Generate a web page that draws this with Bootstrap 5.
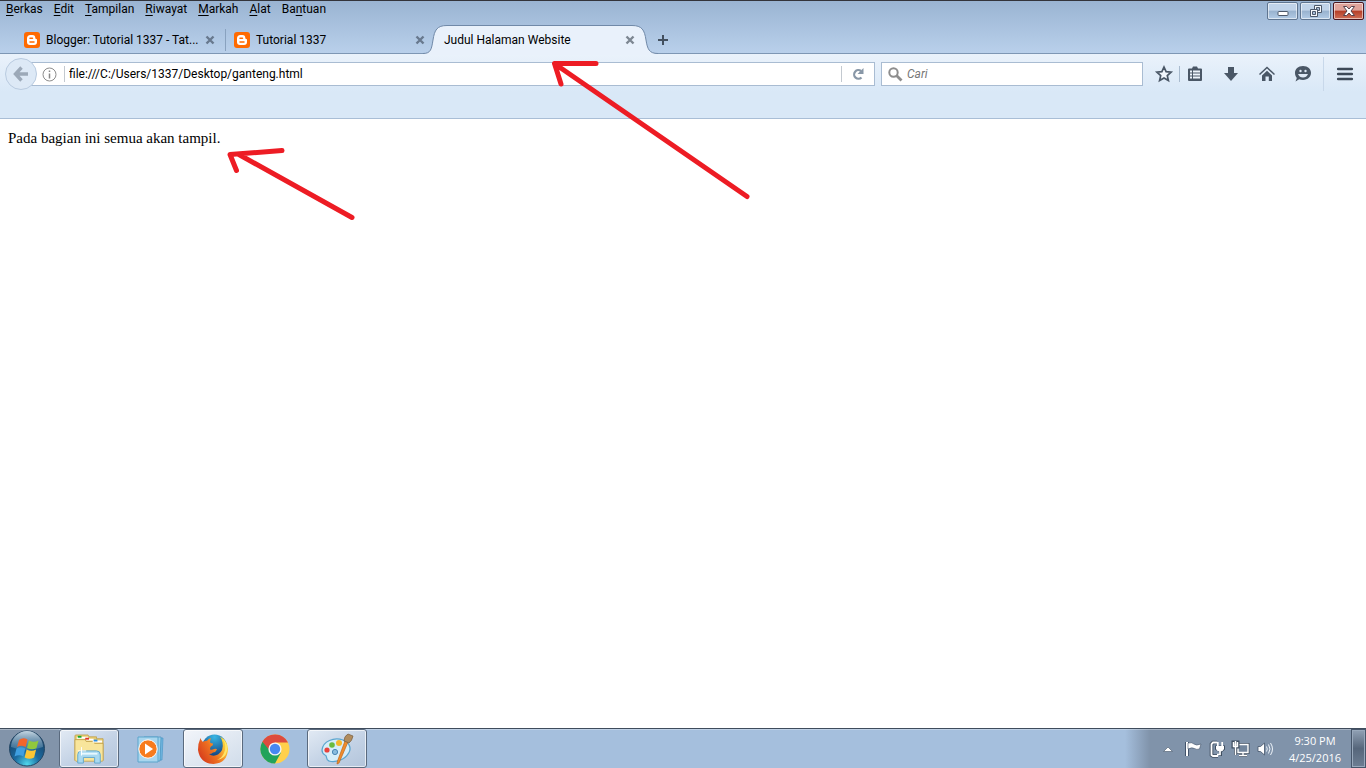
<!DOCTYPE html>
<html lang="id">
<head>
<meta charset="utf-8">
<meta name="viewport" content="width=device-width, initial-scale=1">
<title>Judul Halaman Website</title>
<link href="https://cdn.jsdelivr.net/npm/bootstrap@5.3.0/dist/css/bootstrap.min.css" rel="stylesheet">
<style>
body{font-size:12px;line-height:16px;color:#000;background:#fff;overflow:hidden}
button{font:inherit;color:inherit;background:none;border:0;padding:0}
svg{display:block;flex:none;overflow:visible}
.ui{font-family:Roboto,"Open Sans",sans-serif}
.chrome-top{height:54px;background:linear-gradient(#9ab4d2,#b9d0eb);border-top:1px solid #33343a;border-bottom:1px solid #7e97b4}
.menu-row{height:16px;padding-left:6px;gap:11px}
.menu-row u{text-underline-offset:2px}
.win-buttons{top:1px;right:2px;gap:2px}
.win-btn{width:31px;height:18px;border:1px solid #5f7590;border-radius:2px;box-shadow:inset 0 0 0 1px rgba(255,255,255,.55);background:linear-gradient(#c0d3e9 45%,#98b2ce 50%,#b2cbe6)}
.win-btn.shut{border-color:#4b1720;background:linear-gradient(#e0a49b 45%,#b53e27 50%,#cf7059)}
.tab-row{height:36px;padding:8px 0 0 15px}
.page-tab{width:210px;height:29px;padding:0 10px 0 9px}
.page-tab .tab-icon{margin-right:6px}
.page-tab+.page-tab:not(.current)::before{content:"";position:absolute;left:0;top:4px;height:22px;width:1px;background:#89a2bf}
.tab-shape{left:-12px;top:0}
.plus{width:36px;height:30px}
.toolbar-zone{height:65px;background:linear-gradient(#eaf2fb,#d9e8f7 60%);border-bottom:1px solid #a9bed6;padding:8px 0 0 5px}
.back{width:32px;height:32px;border:1px solid #b9cbe0;border-radius:50%;background:#dde9f6;margin-top:-4px;z-index:1}
.field{height:24px;border:1px solid #a9bcd2;background:#fff}
.field input{border:0;outline:0;background:none;padding:0;min-width:0;line-height:16px}
.field input::placeholder{color:#777;font-style:italic;opacity:1}
.address{margin-left:-6px;padding-left:10px}
.reload{width:32px;height:22px}
.rule{width:1px;height:16px;background:#c3c9d0}
.address svg+.rule{margin:0 4px 0 7px}
.search{width:262px;margin-left:6px;padding-left:6px}
.tools{padding:0 13px;height:24px}
.tools .rule{background:#a9bbcf;margin:0 5px 0 7px}
.tools .tall{height:34px;background:#c8d8ea;margin:0 13px 0 10px}
.tool-set{gap:16px}
.tool-set button{width:20px}
.page-body{font-family:"Liberation Serif",serif;font-size:15px;line-height:20px;padding:9px 8px}
.taskbar{height:40px;background:linear-gradient(90deg,#8294aa 59px,#a5bfdd 60px,#a5bfdd calc(100% - 241px),#8093aa calc(100% - 216px));border-top:1px solid #3f4c5c;box-shadow:inset 0 1px 0 rgba(255,255,255,.3)}
.start{width:54px;margin-right:5px}
.task-set{gap:2px}
.task{width:60px;height:39px;border:1px solid transparent;border-radius:3px}
.task.open{border-color:#5a6a7e;box-shadow:inset 0 0 0 1px rgba(255,255,255,.65);background:linear-gradient(150deg,#e2eaf4,#c3d2e5 55%,#b3c5db)}
.task.front{background:linear-gradient(150deg,#f2f5fa,#dfe7f1 55%,#d0dcea)}
.tray{gap:8px;margin:0 6px 0 12px}
.clock{color:#fff;font-family:"Open Sans",sans-serif;font-size:11px;line-height:17px;width:72px}
.desk{width:15px;height:39px;border:1px solid #46556a;box-shadow:inset 0 0 0 1px #99a9bc;background:linear-gradient(#91a1b5,#56667b 50%,#6d7e93)}
.marks{left:0;top:0;pointer-events:none;z-index:5}
</style>
</head>
<body class="ui vh-100 d-flex flex-column position-relative">
<header class="chrome-top position-relative">
  <nav class="menu-row d-flex align-items-center" aria-label="Menu">
    <button><u>B</u>erkas</button><button><u>E</u>dit</button><button><u>T</u>ampilan</button><button><u>R</u>iwayat</button><button><u>M</u>arkah</button><button><u>A</u>lat</button><button>Ba<u>n</u>tuan</button>
  </nav>
  <div class="win-buttons position-absolute d-flex">
    <button class="win-btn d-flex justify-content-center align-items-center" aria-label="Minimize"><svg width="12" height="14"><rect x="1" y="7.500" width="10" height="4" rx="1" fill="#fff" stroke="#4d596b"/></svg></button>
    <button class="win-btn d-flex justify-content-center align-items-center" aria-label="Restore"><svg width="14" height="12"><g fill="#f5f8fb" stroke="#4d596b"><path d="M5.500 .5h7v7h-7z"/><path d="M7.500 2.500h3v3h-3z" fill="#a6bdd8"/><path d="M1.500 4.500h7v7h-7z"/><path d="M3.500 6.500h3v3h-3z" fill="#a6bdd8"/></g></svg></button>
    <button class="win-btn shut d-flex justify-content-center align-items-center" aria-label="Close"><svg width="14" height="12"><path d="M1.500 1.500h3.200L7 4l2.300-2.500h3.200L9 6l3.500 4.500H9.300L7 8l-2.300 2.500H1.500L5 6z" fill="#fff" stroke="#54414c"/></svg></button>
  </div>
  <div class="tab-row d-flex">
    <div class="page-tab position-relative d-flex align-items-center">
      <svg class="tab-icon" width="16" height="16"><rect width="16" height="16" rx="3" fill="#ff6a00"/><path d="M3 6.500A3.500 3.500 0 0 1 6.500 3h2A3 3 0 0 1 11.300 6q.1 1 1 1 .7.100.7.800V10a3 3 0 0 1-3 3H6a3 3 0 0 1-3-3z" fill="#fff"/><path d="M6 6.200h2.500M6 9.900h4" stroke="#ff6a00" stroke-width="1.500" stroke-linecap="round"/></svg>
      <span class="flex-grow-1 text-nowrap">Blogger: Tutorial 1337 - Tat...</span>
      <button aria-label="Tutup tab"><svg width="10" height="10"><path d="M1.500 1.500l7 7m0-7l-7 7" stroke="#68798e" stroke-width="2.400"/></svg></button>
    </div>
    <div class="page-tab position-relative d-flex align-items-center">
      <svg class="tab-icon" width="16" height="16"><rect width="16" height="16" rx="3" fill="#ff6a00"/><path d="M3 6.500A3.500 3.500 0 0 1 6.500 3h2A3 3 0 0 1 11.300 6q.1 1 1 1 .7.100.7.800V10a3 3 0 0 1-3 3H6a3 3 0 0 1-3-3z" fill="#fff"/><path d="M6 6.200h2.500M6 9.900h4" stroke="#ff6a00" stroke-width="1.500" stroke-linecap="round"/></svg>
      <span class="flex-grow-1 text-nowrap">Tutorial 1337</span>
      <button aria-label="Tutup tab"><svg width="10" height="10"><path d="M1.500 1.500l7 7m0-7l-7 7" stroke="#68798e" stroke-width="2.400"/></svg></button>
    </div>
    <div class="page-tab current position-relative d-flex align-items-center">
      <svg class="tab-shape position-absolute" width="236" height="30"><path d="M0 28.500C8 28.500 8.500 24 10 15 11.500 5 14 .5 24 .5H209C219 .5 221.500 5 223 15 224.500 24 226 28.500 235 28.500V30H0z" fill="#e9f1fb"/><path d="M0 28.500C8 28.500 8.500 24 10 15 11.500 5 14 .5 24 .5H209C219 .5 221.500 5 223 15 224.500 24 226 28.500 235 28.500" fill="none" stroke="#7089a8"/></svg>
      <span class="flex-grow-1 text-nowrap position-relative">Judul Halaman Website</span>
      <button class="position-relative" aria-label="Tutup tab"><svg width="10" height="10"><path d="M1.500 1.500l7 7m0-7l-7 7" stroke="#7d8792" stroke-width="2.400"/></svg></button>
    </div>
    <button class="plus d-flex align-items-center justify-content-center" aria-label="Tab baru"><svg width="12" height="12"><path d="M6 1v10M1 6h10" stroke="#43505f" stroke-width="2"/></svg></button>
  </div>
</header>
<div class="toolbar-zone d-flex">
  <button class="back d-flex align-items-center justify-content-center flex-shrink-0" aria-label="Kembali"><svg width="16" height="16"><path d="M8.500 1.500L2.500 8l6 6.500M3 8h12" fill="none" stroke="#9ca9b8" stroke-width="3.400"/></svg></button>
  <div class="field address d-flex align-items-center flex-grow-1">
    <svg width="15" height="15"><circle cx="7.500" cy="7.500" r="6.500" fill="none" stroke="#8d8d8d"/><path d="M7.500 3.500v1.500M7.500 6.500v5" stroke="#888" stroke-width="1.500"/></svg>
    <span class="rule"></span>
    <input class="flex-grow-1" aria-label="Alamat" value="file:///C:/Users/1337/Desktop/ganteng.html">
    <span class="rule"></span>
    <button class="reload d-flex align-items-center justify-content-center" aria-label="Muat ulang"><svg width="12" height="12"><path d="M9.500 9.500A4.300 4.300 0 1 1 9 3" fill="none" stroke="#8897a7" stroke-width="2.200"/><path d="M11.500 0v6H5.500z" fill="#8897a7"/></svg></button>
  </div>
  <div class="field search d-flex align-items-center">
    <svg width="15" height="15"><circle cx="5.500" cy="5.500" r="4.200" fill="none" stroke="#8d8d8d" stroke-width="2"/><path d="M8.500 8.500l5 5" stroke="#8d8d8d" stroke-width="2.800"/></svg>
    <input class="flex-grow-1 ms-1" aria-label="Cari" placeholder="Cari">
  </div>
  <div class="tools d-flex align-items-center">
    <button aria-label="Markah"><svg width="16" height="16"><path d="M8 1l2.100 4.700 5 .5-3.800 3.400 1.100 5L8 12l-4.400 2.600 1.100-5L.9 6.200l5-.5z" fill="#f1f6fc" stroke="#4a5766" stroke-width="1.700"/></svg></button>
    <span class="rule"></span>
    <div class="tool-set d-flex align-items-center">
    <button class="d-flex justify-content-center" aria-label="Daftar markah"><svg width="16" height="16"><path d="M2 2.500h3l1-2h4l1 2h3q1 0 1 1V14q0 1-1 1H2q-1 0-1-1V3.500q0-1 1-1z" fill="#4a5766"/><path d="M3 5.500h2M6 5.500h7M3 8.500h2M6 8.500h7M3 11.500h2M6 11.500h7" stroke="#edf4fb" stroke-width="1.900"/></svg></button>
    <button class="d-flex justify-content-center" aria-label="Unduhan"><svg width="14" height="16"><path d="M4 1h6v6h4l-7 8-7-8h4z" fill="#4a5766"/></svg></button>
    <button class="d-flex justify-content-center" aria-label="Beranda"><svg width="16" height="16"><path d="M.5 8.500L8 1.500l7.500 7" fill="none" stroke="#4a5766" stroke-width="1.500"/><path d="M3 9.500l5-4.700 5 4.700V15H9.800v-4.500H6.500V15H3z" fill="#4a5766"/></svg></button>
    <button class="d-flex justify-content-center" aria-label="Obrolan"><svg width="18" height="16"><path d="M9 0c5 0 8 3 8 6.800S14 14 9 14c-1.500 0-2.800-.3-3.800-.8L1.500 15.500 2.800 12C1.500 10.500 1 9 1 6.800 1 3 4 0 9 0z" fill="#4a5766"/><circle cx="6.500" cy="5" r="1.200" fill="#dfe9f5"/><circle cx="11.500" cy="5" r="1.200" fill="#dfe9f5"/><path d="M4 8h10Q12.500 11.500 9 11.500T4 8z" fill="#dfe9f5"/></svg></button>
    </div>
    <span class="rule tall"></span>
    <button aria-label="Buka menu"><svg width="16" height="14"><path d="M1.200 2h13.600M1.200 7h13.600M1.200 12h13.600" stroke="#3e4a58" stroke-width="2.600" stroke-linecap="round"/></svg></button>
  </div>
</div>
<main class="page-body flex-grow-1">Pada bagian ini semua akan tampil.</main>
<footer class="taskbar d-flex">
  <button class="start d-flex align-items-center justify-content-center" aria-label="Start">
    <svg width="38" height="38" viewBox="0 0 38 38"><defs><radialGradient id="orb" cx=".5" cy=".95" r=".9"><stop offset="0" stop-color="#50d8ec"/><stop offset=".4" stop-color="#1b6ba0"/><stop offset="1" stop-color="#173b60"/></radialGradient><linearGradient id="sheen" x2="0" y2="1"><stop stop-color="#d8e8f2" stop-opacity=".9"/><stop offset="1" stop-color="#8db5cd" stop-opacity=".25"/></linearGradient></defs><circle cx="19" cy="18.500" r="17.500" fill="url(#orb)" stroke="#244765"/><path d="M3 17a16 16 0 0 1 32 0Q19 23 3 17z" fill="url(#sheen)"/><path d="M11 10q4-3 8.500-.5L17.700 17Q13 14.500 9 17z" fill="#f2652c"/><path d="M21 10.500q5 2.500 9.500 0L28.500 18q-4 2.500-9.500 0z" fill="#91c83d"/><path d="M8.500 18.500q4-2.500 8.800 0l-2 8q-4-2.500-8.800 0z" fill="#3f9fe0"/><path d="M18.600 19.500q5 2.500 9.500 0l-2 8q-4.500 2.500-9.500 0z" fill="#fbc634"/></svg>
  </button>
  <div class="task-set d-flex flex-grow-1">
    <button class="task open d-flex align-items-center justify-content-center" aria-label="Explorer"><svg width="32" height="30" viewBox="0 0 32 32"><g stroke="#bd9c45" stroke-width=".8"><path d="M1 28V2q0-1 1-1h13l1 2h8v2h7v23z" fill="#e8cc71"/><path d="M1 28V6h11l1 2h8l1 2h9v18q0 1-1 1H2z" fill="#f8e59b"/></g><path d="M3 4h12M13 6h8M20 8h10" stroke="#fff" stroke-width="2"/><path d="M4 2h4v2H4z" fill="#16a72d"/><path d="M12 4h4v2h-4z" fill="#df3427"/><path d="M21 6h4v2h-4z" fill="#2a8ce0"/><path d="M4 31v-9q0-4 4-4h16q4 0 4 4v9h-6v-6H10v6z" fill="#a9d9f0" stroke="#5fa6cd"/><path d="M8 21h17" stroke="#e7f8ff" stroke-width="2"/><path d="M8 14v9M4 18h9" stroke="#fff"/></svg></button>
    <button class="task d-flex align-items-center justify-content-center" aria-label="Media Player"><svg width="30" height="28" viewBox="0 0 30 28"><path d="M11 3h16l-1 22H11z" fill="#6fb5df" stroke="#4d9ac8" stroke-width=".7"/><path d="M8 2h17l-1 24H8z" fill="#9ad0eb" stroke="#438fbd" stroke-width=".7"/><path d="M2 2h20v25H2z" fill="#a9d6ee" stroke="#5ba5cc"/><circle cx="12" cy="14" r="9.200" fill="#f77b1c" stroke="#fff"/><path d="M9 8.500v11l8-5.500z" fill="#fff"/></svg></button>
    <button class="task open front d-flex align-items-center justify-content-center" aria-label="Firefox"><svg width="30" height="30" viewBox="0 0 30 30"><defs><radialGradient id="globe" cx=".5" cy=".1" r=".8"><stop stop-color="#38b6e4"/><stop offset="1" stop-color="#123d7c"/></radialGradient><linearGradient id="fox" x1=".1" y1=".9" x2="1" y2=".4"><stop stop-color="#d5391c"/><stop offset=".5" stop-color="#ee7121"/><stop offset="1" stop-color="#ffd83b"/></linearGradient></defs><circle cx="16.500" cy="13" r="12.500" fill="url(#globe)"/><path d="M2.500 4q.5 2.500 2.500 4 2-1.500 4-1.200Q10.500 4.500 13 4q-1 2-1 4.500 1.500 1 3 1 .5 2-2 3-1 1-1 3 2 .5 4-.500 2.500-.5 3 .5-1 2.500-4 3-1.500 1.500-4 1.500 4 3 9 .5 6-4 4.500-12Q24 5 22 2.500q7.500 4 8 12.500-.5 14-14.500 15Q2 29.500 0 16 0 9 2.500 4z" fill="url(#fox)"/><path d="M25 5q4 7 1 14-2 5-7 7 8-1 10-9Q30 9 25 5z" fill="#ffe668"/></svg></button>
    <button class="task d-flex align-items-center justify-content-center" aria-label="Chrome"><svg width="30" height="30" viewBox="0 0 30 30"><circle cx="15" cy="15" r="14.500" fill="#ffd04b"/><path d="M15 15L2.400 7.750A14.500 14.500 0 0 0 15 29.500L21 18.500z" fill="#21a35a"/><path d="M15 15h-6.500L2.400 7.750A14.500 14.500 0 0 1 28 8.500H15z" fill="#dd4b3e"/><circle cx="15" cy="15" r="6.600" fill="#f4f4f4"/><circle cx="15" cy="15" r="5.200" fill="#4688f1"/></svg></button>
    <button class="task open d-flex align-items-center justify-content-center" aria-label="Paint"><svg width="34" height="32" viewBox="0 0 34 32"><path d="M2 17C3 8 14 4 23 7c7 3 9 9 5 14-3 5-12 9-19 7-4-1-1-5-4-6-2-1-3-2-3-5z" fill="#d5edf9" stroke="#5ca6cf" stroke-width="1.300"/><circle cx="7" cy="17" r="2.600" fill="#e9423c"/><circle cx="12" cy="12" r="2.800" fill="#6abb3e"/><circle cx="19" cy="10" r="3" fill="#f6b72b"/><circle cx="15" cy="19" r="2.600" fill="#88bcdf" stroke="#4686b5"/><path d="M28 9l-9 21-2 1 .5-3L25 8z" fill="#f08c2b" stroke="#bf6519" stroke-width=".7"/><path d="M24 8q0-5 4-7l5 2q-1 5-4 7z" fill="#b18c5d" stroke="#765d40" stroke-width=".7"/></svg></button>
  </div>
  <div class="d-flex align-items-center">
    <button aria-label="Ikon tersembunyi"><svg width="10" height="6"><path d="M.5 5.500L5 1l4.500 4.500z" fill="#fff" stroke="#566578" stroke-width=".7"/></svg></button>
    <div class="tray d-flex align-items-center">
    <svg width="16" height="18" viewBox="1 0 16 18"><path d="M3 2v14" stroke="#42536a" stroke-width="4"/><path d="M3 2v14" stroke="#fff" stroke-width="2"/><path d="M4 3q4-1 6 1 2 2 7 0l-1.500 5q-3 1-5-.500Q8 7 4 9z" fill="#fff" stroke="#42536a" stroke-width=".6"/></svg>
    <svg width="16" height="18" viewBox="1 0 16 18"><path d="M9 2.500H5L3.500 4v11L5 16h5" fill="none" stroke="#3f4e60" stroke-width="3.600"/><path d="M9 2.500H5L3.500 4v11L5 16h5" fill="none" stroke="#fff" stroke-width="1.800"/><path d="M7 5.500h10v4l-3 2.500v4h-3v-4L7 9.500z" fill="#3f4e60"/><path d="M9.800 2v4M14.200 2v4M12 10v4.500H9" fill="none" stroke="#fff" stroke-width="1.700"/><path d="M8 6h8v3q-1 2.500-4 2.500T8 9z" fill="#fff"/></svg>
    <svg width="16" height="18" viewBox="1 0 16 18"><path d="M6 4.500h10v8H6zM11 13v3M7 15.500h8" fill="#72859c" stroke="#3f4e60" stroke-width="3"/><path d="M6 4.500h10v8H6zM11 13v3M7 15.500h8" fill="#72859c" stroke="#fff" stroke-width="1.400"/><path d="M1 2h5v5H1zM3.500 7v8" fill="#fff" stroke="#3f4e60" stroke-width="3"/><path d="M1.500 2v4.500h4V2M3.500 1v14" fill="none" stroke="#fff" stroke-width="1.500"/></svg>
    <svg width="16" height="16"><path d="M1 5.500h2.500L7.500 2v12l-4-3.500H1z" fill="#fff" stroke="#44546a" stroke-width=".8"/><path d="M9.500 5.500q1.500 2.500 0 5M11.500 3.500q3 4.500 0 9M13.500 2q4 6 0 12" fill="none" stroke="#edf3f9" stroke-width="1"/></svg>
    </div>
    <div class="clock text-center">9:30 PM<br>4/25/2016</div>
    <button class="desk" aria-label="Tampilkan desktop"></button>
  </div>
</footer>
<svg class="marks position-absolute" width="760" height="230" aria-hidden="true"><g fill="none" stroke="#ed1c24" stroke-width="5" stroke-linecap="round" stroke-linejoin="round"><path d="M596 63.500H554.500L561 84M555 64L747 196.500"/><path d="M282 150.500L230 154.500L236.500 170.500M238 154L352 217.500"/></g></svg>
<script src="https://cdn.jsdelivr.net/npm/bootstrap@5.3.0/dist/js/bootstrap.bundle.min.js"></script>
</body>
</html>
